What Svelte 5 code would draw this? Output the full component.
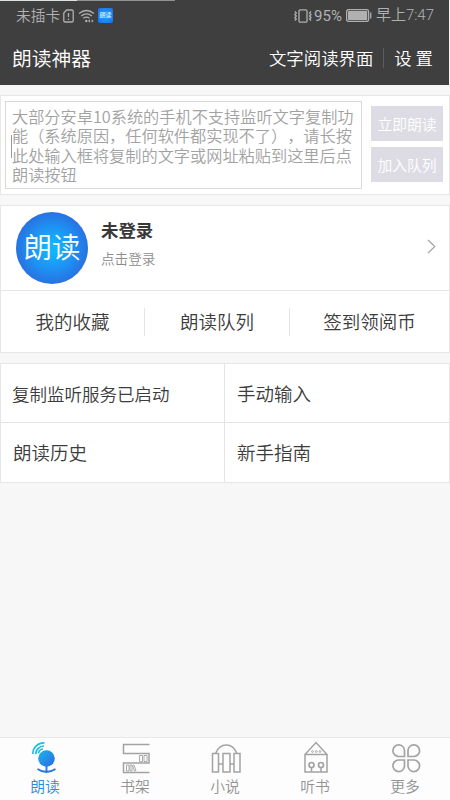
<script lang="ts">
	const hint = [
		'大部分安卓10系统的手机不支持监听文字复制功',
		'能（系统原因，任何软件都实现不了），请长按',
		'此处输入框将复制的文字或网址粘贴到这里后点',
		'朗读按钮'
	];
	const shortcuts = ['我的收藏', '朗读队列', '签到领阅币'];
	const entries = ['复制监听服务已启动', '手动输入', '朗读历史', '新手指南'];
	const tabs = [
		{ id: 'read', label: '朗读' },
		{ id: 'shelf', label: '书架' },
		{ id: 'novel', label: '小说' },
		{ id: 'listen', label: '听书' },
		{ id: 'more', label: '更多' }
	];
	let active = $state('read');
</script>

<div class="screen">
	<div class="top">
		<div class="strip"></div>
		<div class="status">
			<span class="carrier">未插卡</span>
			<svg class="sim" width="11" height="14" viewBox="0 0 11 14">
				<path d="M3.5 1H9a1.2 1.2 0 0 1 1.2 1.2v9.6A1.2 1.2 0 0 1 9 13H2a1.2 1.2 0 0 1-1.2-1.2V4z" />
				<path d="M5.5 4v4M5.5 9.5v1.6" />
			</svg>
			<svg class="wifi" width="17" height="14" viewBox="0 0 17 14">
				<path d="M1 4.6Q8.5-1.6 16 4.6M3.2 7Q8.5 2.6 13.8 7M5.3 9.3Q8.5 6.8 11.5 9.3" />
				<circle cx="8.3" cy="12" r="1.2" />
				<path class="arrow" d="M12 10.3l-2 1.7 2 1.7zM13.6 10.3l2 1.7-2 1.7z" />
			</svg>
			<span class="app-badge">朗读</span>
			<span class="spacer"></span>
			<svg class="vibrate" width="18" height="14" viewBox="0 0 18 14">
				<rect x="5" y="0.8" width="8" height="12.4" rx="1.2" />
				<path d="M.8 2.5l1.5 1.5-1.5 1.5 1.5 1.5L.8 8.5l1.5 1.5-1.5 1.5M17 2.500L15.500 4 17 5.500 15.500 7 17 8.500 15.500 10l1.500 1.500" />
			</svg>
			<span class="percent">95%</span>
			<svg class="battery" width="26" height="13" viewBox="0 0 26 13">
				<rect class="case" x="0.6" y="0.6" width="22" height="11.8" rx="2" />
				<rect class="fill" x="2" y="2" width="19.2" height="9" rx="0.5" />
				<path d="M24.7 3.5v6" />
			</svg>
			<span class="clock">早上7:47</span>
		</div>
		<header>
			<h1>朗读神器</h1>
			<span class="mode">文字阅读界面</span>
			<span class="bar"></span>
			<span class="settings">设 置</span>
		</header>
	</div>

	<main>
		<section class="card composer">
			<div class="input">
				<span class="caret"></span>
				{#each hint as line}
					<div>{line}</div>
				{/each}
			</div>
			<div class="actions">
				<button>立即朗读</button>
				<button>加入队列</button>
			</div>
		</section>

		<section class="card account">
			<div class="profile">
				<div class="avatar">朗读</div>
				<div class="who">
					<strong>未登录</strong>
					<span>点击登录</span>
				</div>
				<svg class="chevron" width="9" height="15" viewBox="0 0 9 15">
					<path d="M1 1l6.8 6.5L1 14" />
				</svg>
			</div>
			<div class="shortcuts">
				{#each shortcuts as name}
					<span>{name}</span>
				{/each}
			</div>
		</section>

		<section class="card entries">
			{#each entries as name}
				<div class="entry" class:long={name.length > 4}>{name}</div>
			{/each}
		</section>
	</main>

	<nav>
		{#each tabs as tab}
			<button class="tab" class:active={active === tab.id} onclick={() => (active = tab.id)}>
				<svg width="34" height="34" viewBox="0 0 34 34">
					{#if tab.id === 'read'}
						<defs>
							<linearGradient id="mic" x1="0" y1="0" x2="1" y2="1">
								<stop offset="0" stop-color="#1cb5ee" />
								<stop offset="1" stop-color="#2969e2" />
							</linearGradient>
						</defs>
						<circle cx="18.5" cy="17.500" r="8.300" fill="url(#mic)" />
						<g stroke="#19bfe9" stroke-width="1.7">
							<path d="M4.800 13A11 11 0 0 1 16.500 2" />
							<path d="M7.800 13A8 8 0 0 1 16 5" />
							<path d="M10.500 12.300A5 5 0 0 1 15 8" />
						</g>
						<path d="M18.5 25v6M9.500 28Q18.500 34 27.500 28" stroke="#2878df" stroke-width="1.9" />
					{:else if tab.id === 'shelf'}
						<path d="M31.500 3.500H5.500v9h25.500v9.500H5.500v9.500h26" stroke-width="1.500" />
						<path d="M21.500 14.500h3v6h-3zM26 14.500h3v6h-3zM8.500 24h2.500v6H8.500zM12 24h2v6h-2zM14.500 24.500l1.500-.5 2 5.500-1.500.5z" stroke-width="0.9" />
					{:else if tab.id === 'novel'}
						<path d="M4.500 12.500h6v18.500h-6zM15 12.500h7v18.500h-7zM26 12.500h6v18.500h-6zM10.500 23H15M22 23h4M7.500 12.500Q11 4 18.300 4T29 12.500" stroke-width="1.5" />
					{:else if tab.id === 'listen'}
						<path d="M7 13.500h22v17.500H7zM7 13.500L18 1.500l11 12M13.500 26v5M23 26v5" stroke-width="1.5" />
						<g stroke-width="1.7">
							<circle cx="13.5" cy="24" r="2.500" />
							<circle cx="23" cy="24" r="2.500" />
						</g>
						<g stroke-width="0.9">
							<circle cx="14.5" cy="10.500" r="0.900" />
							<circle cx="18.300" cy="10.500" r="0.900" />
							<circle cx="22" cy="10.500" r="0.900" />
						</g>
					{:else}
						<path
							d="M16.500 15.500H10.500A5.800 5.800 0 1 1 16.500 9.500zM20 15.500V9.500A5.800 5.800 0 1 1 26 15.500zM16.500 19v6A5.800 5.800 0 1 1 10.500 19zM20 19h6A5.800 5.800 0 1 1 20 25z"
							stroke-width="1.7"
						/>
					{/if}
				</svg>
				<span>{tab.label}</span>
			</button>
		{/each}
	</nav>
</div>

<style>
	:global(body) {
		background: #f7f7f7;
	}

	.screen {
		display: flex;
		flex-direction: column;
		height: 800px;
		overflow: hidden;
		background: #f7f7f7;
		color: #3c3c3c;
		font-family: 'Noto Sans CJK SC', sans-serif;
		font-weight: 350;
		white-space: nowrap;
		text-spacing-trim: space-all;
	}

	svg {
		display: block;
		flex: none;
		fill: none;
	}

	button {
		border: 0;
		padding: 0;
		font: inherit;
	}

	.top {
		height: 85px;
		margin-right: 1px;
		background: #3f3f3f;
	}

	.strip {
		width: 175px;
		height: 1px;
		background: linear-gradient(to right, #dce3df 77px, #929292 77px);
	}

	.status {
		display: flex;
		align-items: center;
		height: 29px;
		padding: 0 15px 0 16px;
		color: #b2b2b2;
		font-size: 14.7px;
		line-height: 20px;
	}

	.status svg {
		stroke: #b0b0b0;
		stroke-width: 1.3;
	}

	.carrier {
		margin-top: -1px;
	}

	.sim {
		margin-left: 3px;
	}

	.wifi {
		margin-left: 4px;
	}

	.wifi circle,
	.wifi .arrow {
		fill: #b0b0b0;
		stroke: none;
	}

	.app-badge {
		width: 15px;
		height: 15px;
		margin-left: 3px;
		border-radius: 2px;
		background: radial-gradient(#18a9fc, #256be3);
		color: #d8f0ff;
		font-size: 6px;
		font-weight: 500;
		line-height: 14px;
		text-align: center;
	}

	.spacer {
		flex: 1;
	}

	.percent {
		margin: 0 4px 0 2px;
		font-family: Roboto, sans-serif;
		font-size: 15px;
		font-weight: 400;
	}

	.battery .fill {
		fill: #b0b0b0;
		stroke: none;
	}

	.clock {
		margin: -1px 0 0 4px;
		font-family: Roboto, 'Noto Sans CJK SC', sans-serif;
		font-size: 15px;
	}

	header {
		display: flex;
		align-items: center;
		height: 55px;
		padding: 0 16px 0 12px;
		color: #fff;
		font-size: 17.4px;
	}

	h1 {
		flex: 1;
		margin: 0;
		font-size: 19.8px;
		font-weight: 350;
	}

	.bar {
		width: 1px;
		height: 20px;
		margin: 0 10px;
		background: #5c5c5c;
	}

	main {
		flex: 1;
		display: flex;
		flex-direction: column;
		gap: 10px;
		padding-top: 10px;
	}

	.card {
		box-sizing: border-box;
		border: 1px solid #e6e6e6;
		background: #fff;
	}

	.composer {
		display: flex;
		height: 100px;
		padding: 5px 6px 5px 4px;
	}

	.input {
		position: relative;
		box-sizing: border-box;
		width: 357px;
		height: 88px;
		padding: 5px 0 0 6px;
		border: 1px solid #dadada;
		color: #a2a2a2;
		font-size: 16.2px;
		line-height: 19.4px;
	}

	.caret {
		position: absolute;
		left: 5px;
		top: 33px;
		width: 1px;
		height: 23px;
		background: #999;
	}

	.actions {
		flex: 1;
		display: flex;
		flex-direction: column;
		gap: 6px;
		padding: 5px 0 0 9px;
	}

	.actions button {
		height: 35px;
		background: #dddce4;
		color: #fff;
		font-size: 14.8px;
	}

	.account {
		height: 148px;
	}

	.profile {
		display: flex;
		align-items: center;
		height: 84px;
		padding: 0 13px 0 15px;
		border-bottom: 1px solid #e6e6e6;
	}

	.avatar {
		width: 72px;
		height: 72px;
		border-radius: 50%;
		background: radial-gradient(circle closest-side, #11b4fd 15%, #1e92f2 60%, #2872e2);
		color: #fff;
		font-size: 28.5px;
		line-height: 68px;
		text-align: center;
	}

	.who {
		flex: 1;
		display: flex;
		flex-direction: column;
		gap: 8px;
		margin: -8px 0 0 13px;
		line-height: 20px;
	}

	.who strong {
		color: #383838;
		font-size: 17.4px;
		font-weight: 700;
	}

	.who span {
		color: #8c8c8c;
		font-size: 13.6px;
	}

	.chevron {
		margin-top: -3px;
		stroke: #a5a5a5;
		stroke-width: 1.2;
	}

	.shortcuts {
		display: grid;
		grid-template-columns: 143px 145px 1fr;
		align-items: center;
		height: 61px;
		font-size: 18.5px;
	}

	.shortcuts span {
		height: 28px;
		line-height: 26px;
		text-align: center;
	}

	.shortcuts span + span {
		border-left: 1px solid #e4e4e4;
	}

	.entries {
		display: grid;
		grid-template-columns: 223px 1fr;
		grid-template-rows: 58px 60px;
		height: 120px;
	}

	.entry {
		padding-left: 12px;
		font-size: 18.5px;
		line-height: 58px;
	}

	.entry.long {
		padding-left: 11px;
		font-size: 17.5px;
		line-height: 60px;
	}

	.entry:nth-child(even) {
		border-left: 1px solid #e4e4e4;
	}

	.entry:nth-child(n + 3) {
		border-top: 1px solid #e4e4e4;
	}

	nav {
		box-sizing: border-box;
		display: grid;
		grid-template-columns: repeat(5, 1fr);
		height: 63px;
		border-top: 1px solid #e8e8e8;
		background: #fdfdfd;
	}

	.tab {
		display: flex;
		flex-direction: column;
		align-items: center;
		padding-top: 3px;
		background: none;
		color: #929292;
		font-size: 14.8px;
		line-height: 22px;
	}

	.tab svg {
		stroke: #a3a3a3;
	}

	.tab circle[fill] {
		stroke: none;
	}

	.tab.active {
		color: #2d8bdc;
	}
</style>
